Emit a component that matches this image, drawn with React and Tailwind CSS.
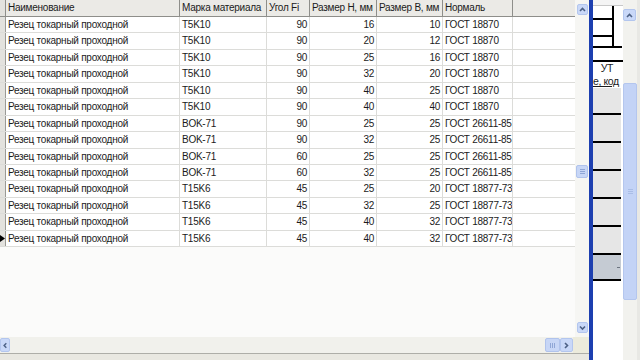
import React from 'react';

const columns = [
  { key: 'name', title: 'Наименование', width: 'w-[174px]', align: 'left' },
  { key: 'mark', title: 'Марка материала', width: 'w-[87px]', align: 'left' },
  { key: 'angle', title: 'Угол Fi', width: 'w-[43px]', align: 'right' },
  { key: 'h', title: 'Размер H, мм', width: 'w-[67px]', align: 'right' },
  { key: 'b', title: 'Размер B, мм', width: 'w-[66px]', align: 'right' },
  { key: 'norm', title: 'Нормаль', width: 'w-[70px]', align: 'left' },
];

const rows = [
  ['T5K10', 90, 16, 10, 'ГОСТ 18870'],
  ['T5K10', 90, 20, 12, 'ГОСТ 18870'],
  ['T5K10', 90, 25, 16, 'ГОСТ 18870'],
  ['T5K10', 90, 32, 20, 'ГОСТ 18870'],
  ['T5K10', 90, 40, 25, 'ГОСТ 18870'],
  ['T5K10', 90, 40, 40, 'ГОСТ 18870'],
  ['BOK-71', 90, 25, 25, 'ГОСТ 26611-85'],
  ['BOK-71', 90, 32, 25, 'ГОСТ 26611-85'],
  ['BOK-71', 60, 25, 25, 'ГОСТ 26611-85'],
  ['BOK-71', 60, 32, 25, 'ГОСТ 26611-85'],
  ['T15K6', 45, 25, 20, 'ГОСТ 18877-73'],
  ['T15K6', 45, 32, 25, 'ГОСТ 18877-73'],
  ['T15K6', 45, 40, 32, 'ГОСТ 18877-73'],
  ['T15K6', 45, 40, 32, 'ГОСТ 18877-73'],
];

function Chevron({ dir }) {
  // small XP style scroll arrow
  const paths = {
    up: 'M2 6 L4.5 3.5 L7 6',
    down: 'M2 3.5 L4.5 6 L7 3.5',
    left: 'M6 2 L3.5 4.5 L6 7',
    right: 'M3 2 L5.5 4.5 L3 7',
  };
  return (
    <svg width="9" height="9" viewBox="0 0 9 9">
      <path d={paths[dir]} fill="none" stroke="#4d6185" strokeWidth="1.6" />
    </svg>
  );
}

function ScrollButton({ dir, className = '' }) {
  return (
    <div className={`flex items-center justify-center rounded-[2px] bg-[#c9d8f8] border border-[#b3c6ee] ${className}`}>
      <Chevron dir={dir} />
    </div>
  );
}

function HeaderRow() {
  return (
    <div className="flex h-[17px] bg-[#ebeae6] border-b border-[#8e8e8a]">
      <div className="w-[6px] border-r border-[#8e8e8a] bg-[#e3e2de]" />
      {columns.map((c) => (
        <div
          key={c.key}
          className={`${c.width} shrink-0 overflow-hidden whitespace-nowrap border-r border-[#8e8e8a] px-[2px] leading-[16px]`}
        >
          {c.title}
        </div>
      ))}
    </div>
  );
}

function DataRow({ row, current }) {
  const cells = ['Резец токарный проходной', ...row];
  return (
    <div className="flex h-[16.45px] border-b border-[#dcdcd9] bg-white">
      <div className="w-[6px] shrink-0 border-r border-[#9a9a96] bg-[#e3e2de] flex items-center overflow-hidden">
        {current && (
          <svg width="5" height="7" viewBox="0 0 5 7">
            <path d="M0 0 L5 3.5 L0 7 Z" fill="#000" />
          </svg>
        )}
      </div>
      {columns.map((c, i) => (
        <div
          key={c.key}
          className={`${c.width} shrink-0 overflow-hidden whitespace-nowrap border-r border-[#dcdcd9] px-[2px] leading-[15.5px] ${
            c.align === 'right' ? 'text-right' : 'text-left'
          }`}
        >
          {cells[i]}
        </div>
      ))}
    </div>
  );
}

function RightPanel() {
  return (
    <div className="w-[30px] h-full flex flex-col bg-white text-[10.5px] tracking-[-0.4px]">
      <div className="h-[6px] bg-[#f4f4f4] border-b border-[#c8c8c8]" />
      <div className="h-[14px] w-[21px] border-r-2 border-b-2 border-black" />
      <div className="h-[17px] w-[21px] border-r-2 border-b-2 border-black" />
      <div className="h-[11px] w-[29px] border-b-2 border-black">
        <div className="h-full w-[21px] border-r-2 border-black" />
      </div>
      <div className="h-[14px] w-[30px] border-b-2 border-black" />
      <div className="h-[13px] flex justify-end pr-[10px] leading-[13px]">УТ</div>
      <div className="h-[13px] leading-[12px] underline whitespace-nowrap">е, код</div>
      <div className="h-[27px] bg-[#e6e6e6] border-b-2 border-black w-[28px]" />
      <div className="h-[28px] bg-[#e6e6e6] border-b-2 border-black w-[28px]" />
      <div className="h-[28px] bg-[#e6e6e6] border-b-2 border-black w-[28px]" />
      <div className="h-[28px] bg-[#e6e6e6] border-b-2 border-black w-[28px]" />
      <div className="h-[28px] bg-[#e6e6e6] border-b-2 border-black w-[28px]" />
      <div className="h-[28px] bg-[#e6e6e6] border-b-2 border-black w-[28px]" />
      <div className="h-[26px] bg-[#c5cbd3] border-b-2 border-black w-[28px] flex items-center justify-end pr-[1px]">
        <div className="w-[3px] h-[1px] bg-[#6c7480]" />
      </div>
      <div className="flex-1 bg-white" />
    </div>
  );
}

export default function App() {
  return (
    <div
      className="w-[640px] h-[360px] overflow-hidden flex bg-[#f3f3ef] text-[#1b1b1b] text-[10px] tracking-[-0.25px]"
      style={{ fontFamily: '"Liberation Sans", Arial, sans-serif' }}
    >
      {/* main grid pane */}
      <div className="w-[589px] h-full flex flex-col">
        <div className="flex h-[337px]">
          <div className="w-[575px] bg-[#fbfbfa] overflow-hidden">
            <HeaderRow />
            {rows.map((r, i) => (
              <DataRow key={i} row={r} current={i === rows.length - 1} />
            ))}
          </div>
          <div className="w-[14px] flex flex-col items-center bg-[#f6f6f3] py-[4px]">
            <ScrollButton dir="up" className="w-[11px] h-[11px]" />
            <div className="flex-1 flex flex-col w-full items-center">
              <div className="h-[150px]" />
              <div className="w-[12px] h-[13px] rounded-[2px] bg-[#c7d6f6] border border-[#b0c3ec] flex flex-col items-center justify-center gap-[1px]">
                <div className="w-[5px] h-[1px] bg-[#8fa6d6]" />
                <div className="w-[5px] h-[1px] bg-[#8fa6d6]" />
                <div className="w-[5px] h-[1px] bg-[#8fa6d6]" />
              </div>
            </div>
            <ScrollButton dir="down" className="w-[11px] h-[11px]" />
          </div>
        </div>
        {/* horizontal scrollbar */}
        <div className="flex h-[16px] bg-[#f1f1ec] items-center">
          <ScrollButton dir="left" className="w-[10px] h-[14px]" />
          <div className="flex-1" />
          <div className="w-[15px] h-[14px] rounded-[2px] bg-[#c7d6f6] border border-[#b0c3ec] flex items-center justify-center gap-[1px]">
            <div className="w-[1px] h-[5px] bg-[#8fa6d6]" />
            <div className="w-[1px] h-[5px] bg-[#8fa6d6]" />
            <div className="w-[1px] h-[5px] bg-[#8fa6d6]" />
          </div>
          <ScrollButton dir="right" className="w-[13px] h-[14px]" />
          <div className="w-[16px] h-full bg-[#ecebdc]" />
        </div>
        <div className="flex-1 border-t border-[#aeaea8] bg-[#e9e8e1]" />
      </div>

      {/* blue window border */}
      <div className="w-[4px] h-full bg-[#1d3fb0]" />

      <RightPanel />

      {/* right scrollbar */}
      <div className="w-[14px] h-full flex flex-col bg-[#f2f2ee]">
        <div className="h-[9px]" />
        <ScrollButton dir="up" className="w-[13px] h-[12px]" />
        <div className="h-[62px]" />
        <div className="h-[217px] bg-[#c3d3f6] border border-[#b4c6ee] rounded-[2px] flex items-center justify-center">
          <div className="flex flex-col gap-[1px]">
            <div className="w-[5px] h-[1px] bg-[#a9bde6]" />
            <div className="w-[5px] h-[1px] bg-[#a9bde6]" />
            <div className="w-[5px] h-[1px] bg-[#a9bde6]" />
          </div>
        </div>
        <div className="flex-1" />
      </div>
      <div className="w-[3px] h-full bg-[#e8e8e4]" />
    </div>
  );
}
